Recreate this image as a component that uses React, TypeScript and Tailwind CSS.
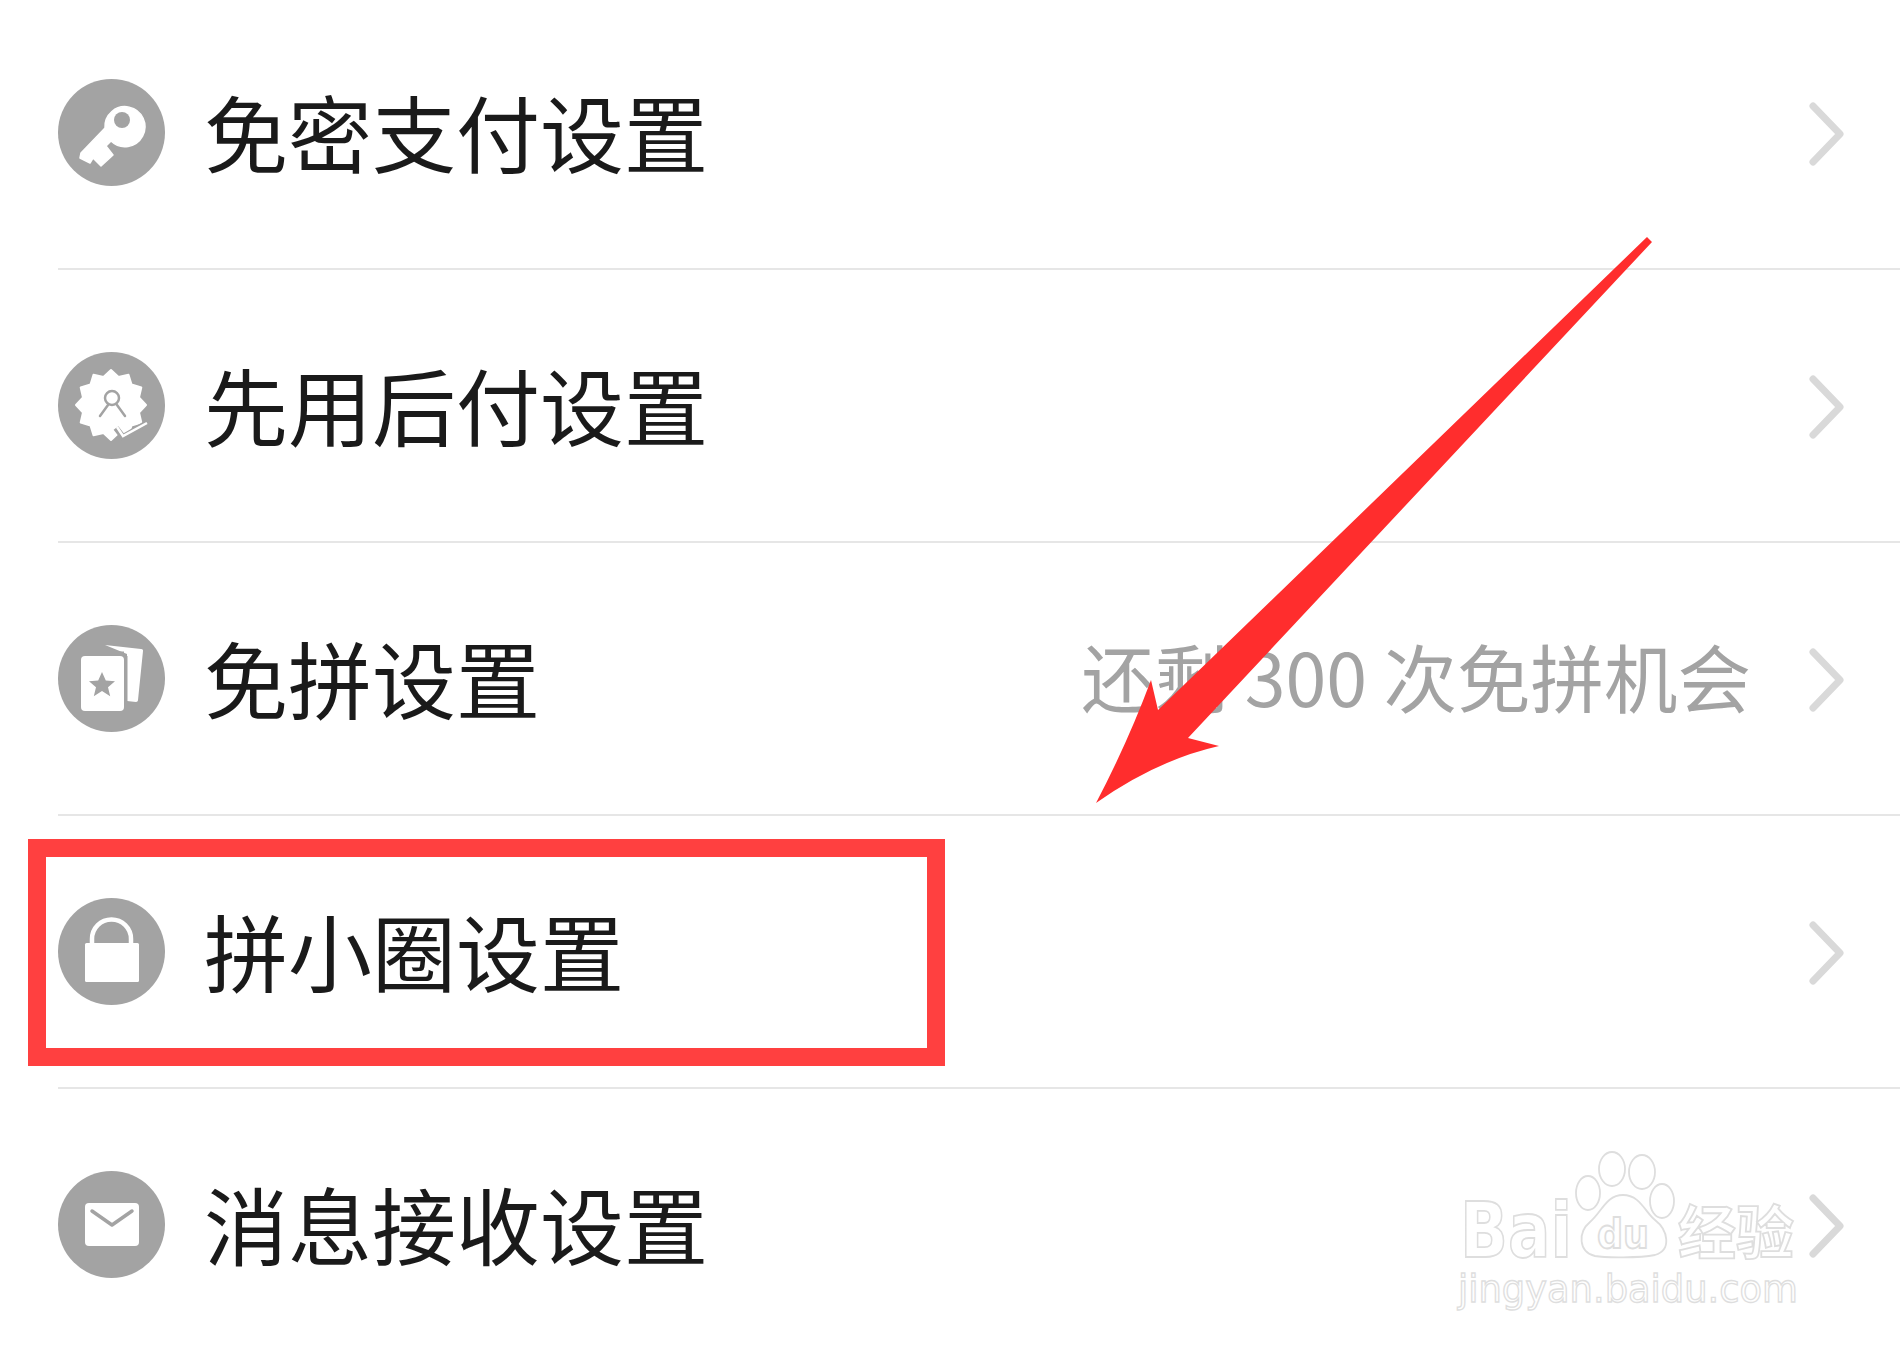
import React from "react";

const cjk = { fontFamily: '"Noto Sans CJK SC", "Noto Sans", sans-serif' };

function Circle({ children }: { children: React.ReactNode }) {
  return (
    <svg viewBox="0 0 107 107" className="w-[107px] h-[107px] shrink-0">
      <circle cx="53.5" cy="53.5" r="53.5" fill="#a3a3a3" />
      {children}
    </svg>
  );
}

const KeyIcon = () => (
  <Circle>
    <path
      fill="#fff"
      stroke="#fff"
      strokeWidth="1.500"
      strokeLinejoin="round"
      d="M47 49L23 74L22 79L32 84L35 79L43 87L55 76L48 67L53 62A20 20 0 1 0 47 49Z"
    />
    <circle cx="64" cy="41" r="8" fill="#a3a3a3" />
  </Circle>
);

const BadgeIcon = () => {
  const pts: string[] = [];
  for (let i = 0; i < 24; i++) {
    const r = i % 2 === 0 ? 35 : 29;
    const a = (i * Math.PI) / 12 - Math.PI / 2;
    pts.push(`${(53 + r * Math.cos(a)).toFixed(1)},${(53 + r * Math.sin(a)).toFixed(1)}`);
  }
  return (
    <Circle>
      <polygon points={pts.join(" ")} fill="#fff" strokeLinejoin="round" stroke="#fff" strokeWidth="2" />
      <circle cx="54" cy="46" r="7" fill="none" stroke="#a3a3a3" strokeWidth="2.500" />
      <path d="M42 64l8-11M67 64l-8-11" fill="none" stroke="#a3a3a3" strokeWidth="2.500" strokeLinecap="round" />
      <path d="M58 76l7 9 24-14" fill="none" stroke="#a3a3a3" strokeWidth="6" />
      <path d="M59 75l6 9 24-13" fill="none" stroke="#fff" strokeWidth="2.500" />
    </Circle>
  );
};

const CardsIcon = () => (
  <Circle>
    <path d="M47 20l36 4c2 0 2 1 2 2l-5 49c0 1-1 2-2 2l-9-1V29z" fill="#fff" />
    <rect x="23" y="31" width="43" height="55" rx="4" fill="#fff" />
    <path d="M44 47l3.800 8.500 9.200.8-7 6 2.200 9L44 66l-8.200 5.300 2.200-9-7-6 9.200-.8z" fill="#a3a3a3" />
    <path d="M68 31v53" stroke="#a3a3a3" strokeWidth="3" />
    <path d="M47 28h19" stroke="#a3a3a3" strokeWidth="3" />
  </Circle>
);

const LockIcon = () => (
  <Circle>
    <path d="M34 47V41a19.500 19.500 0 0 1 39 0v6" fill="none" stroke="#fff" strokeWidth="4.500" />
    <rect x="27" y="45" width="54" height="39" rx="1.500" fill="#fff" />
  </Circle>
);

const MailIcon = () => (
  <Circle>
    <rect x="27" y="32" width="54" height="43" rx="4" fill="#fff" />
    <path d="M34 40l20 14 20-14" fill="none" stroke="#a3a3a3" strokeWidth="3.500" strokeLinecap="round" strokeLinejoin="round" />
  </Circle>
);

const Chevron = () => (
  <svg viewBox="0 0 36 64" className="w-[36px] h-[64px] shrink-0 mt-[3px]">
    <path d="M4 4l27 28L4 60" fill="none" stroke="#d9d9d9" strokeWidth="7" strokeLinecap="round" strokeLinejoin="round" />
  </svg>
);

function Row({ icon, label, sub }: { icon: React.ReactNode; label: string; sub?: string }) {
  return (
    <div className="ml-[58px] h-[273px] shrink-0 flex items-center border-b-2 border-[#e6e6e6] pr-[55px]">
      {icon}
      <span className="ml-[39px] pb-[4px] text-[84px] leading-none text-[#1a1a1a]" style={cjk}>
        {label}
      </span>
      <span className="ml-auto mr-[58px] pb-[6px] text-[73.5px] leading-none text-[#a3a3a3]" style={cjk}>
        {sub}
      </span>
      <Chevron />
    </div>
  );
}

const stroked = {
  fill: "#fff",
  stroke: "#dedede",
  strokeWidth: 1.800,
};

export default function App() {
  return (
    <div className="relative w-[1900px] h-[1354px] overflow-hidden bg-white">
      <div className="flex flex-col -mt-[3px]">
        <Row icon={<KeyIcon />} label="免密支付设置" />
        <Row icon={<BadgeIcon />} label="先用后付设置" />
        <Row icon={<CardsIcon />} label="免拼设置" sub="还剩 300 次免拼机会" />
        <Row icon={<LockIcon />} label="拼小圈设置" />
        <Row icon={<MailIcon />} label="消息接收设置" />
      </div>

      <div className="absolute left-[28px] top-[839px] w-[917px] h-[227px] border-[18px] border-[#ff4040]" />

      <svg viewBox="1080 220 600 600" className="absolute left-[1080px] top-[220px] w-[600px] h-[600px]">
        <path
          d="M1647 237L1652 242L1188 738L1219 746Q1157 760 1096 803Q1128 742 1151 680L1158 710Z"
          fill="#ff2d2d"
        />
      </svg>

      <svg viewBox="1440 1140 400 190" className="absolute left-[1440px] top-[1140px] w-[400px] h-[190px]">
        <g {...stroked}>
          <ellipse cx="1612" cy="1169" rx="13" ry="17" />
          <ellipse cx="1642" cy="1172" rx="13" ry="17" />
          <ellipse cx="1588" cy="1193" rx="12" ry="17" />
          <ellipse cx="1662" cy="1201" rx="12" ry="17" />
          <path d="M1623 1195C1640 1195 1645 1212 1655 1220C1668 1230 1672 1250 1655 1255C1640 1258 1605 1258 1595 1256C1578 1252 1578 1232 1590 1222C1602 1212 1606 1195 1623 1195Z" />
          <text x="1460" y="1257" fontSize="76" fontWeight="700" fontFamily='"DejaVu Sans", sans-serif' textLength="112" lengthAdjust="spacingAndGlyphs">Bai</text>
          <text x="1597" y="1248" fontSize="40" fontWeight="700" fontFamily='"DejaVu Sans", sans-serif' textLength="52" lengthAdjust="spacingAndGlyphs">du</text>
          <text x="1678" y="1254" fontSize="58" fontWeight="700" fontFamily='"Noto Sans CJK SC", sans-serif' textLength="116" lengthAdjust="spacingAndGlyphs">经验</text>
          <text x="1458" y="1302" fontSize="37" strokeWidth="1.300" fontFamily='"DejaVu Sans", sans-serif' textLength="340" lengthAdjust="spacingAndGlyphs">jingyan.baidu.com</text>
        </g>
      </svg>
    </div>
  );
}
